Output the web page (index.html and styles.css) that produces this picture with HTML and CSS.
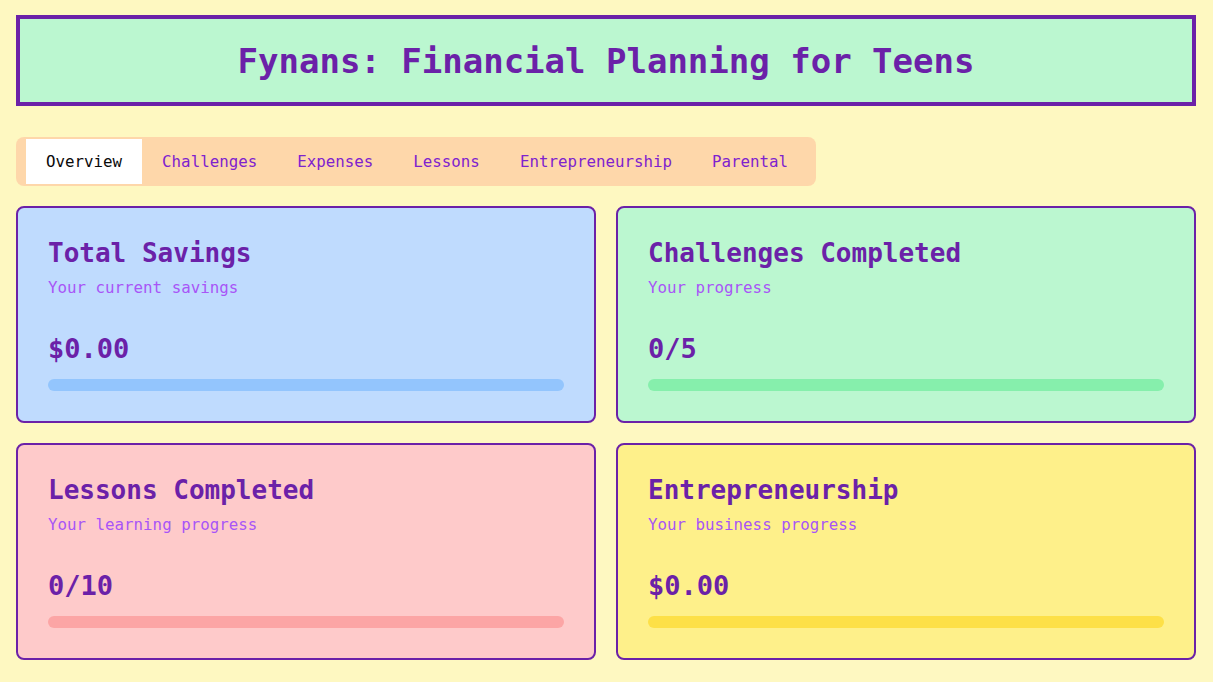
FILE: index.html
```html
<!DOCTYPE html>
<html lang="en">
<head>
<meta charset="utf-8">
<title>Fynans</title>
<link rel="stylesheet" href="styles.css">
</head>
<body>
<div class="app">
  <header class="banner">
    <h1 class="banner-title">Fynans: Financial Planning for Teens</h1>
  </header>

  <nav class="tabs">
    <span class="tab tab-active">Overview</span>
    <span class="tab">Challenges</span>
    <span class="tab">Expenses</span>
    <span class="tab">Lessons</span>
    <span class="tab">Entrepreneurship</span>
    <span class="tab">Parental</span>
  </nav>

  <main class="cards">
    <section class="card card-blue">
      <h2 class="card-title">Total Savings</h2>
      <p class="card-sub">Your current savings</p>
      <div class="card-value">$0.00</div>
      <div class="bar"></div>
    </section>
    <section class="card card-green">
      <h2 class="card-title">Challenges Completed</h2>
      <p class="card-sub">Your progress</p>
      <div class="card-value">0/5</div>
      <div class="bar"></div>
    </section>
    <section class="card card-red">
      <h2 class="card-title">Lessons Completed</h2>
      <p class="card-sub">Your learning progress</p>
      <div class="card-value">0/10</div>
      <div class="bar"></div>
    </section>
    <section class="card card-yellow">
      <h2 class="card-title">Entrepreneurship</h2>
      <p class="card-sub">Your business progress</p>
      <div class="card-value">$0.00</div>
      <div class="bar"></div>
    </section>
  </main>
</div>
</body>
</html>
```

FILE: styles.css
```css
* { box-sizing: border-box; }

html, body {
  margin: 0;
  padding: 0;
  background: #fef8c1;
}

body {
  font-family: "DejaVu Sans Mono", "Liberation Mono", monospace;
  color: #6b21a8;
}

.app {
  padding: 15px 17px 16px 16px;
  display: flex;
  flex-direction: column;
}

.banner {
  background: #bbf7d0;
  border: 4px solid #6b21a8;
  height: 91px;
  display: flex;
  align-items: center;
  justify-content: center;
  padding-top: 2px;
}

.banner-title {
  margin: 0;
  font-size: 34px;
  font-weight: bold;
  color: #6b21a8;
  line-height: 1.2;
}

.tabs {
  margin-top: 31px;
  align-self: flex-start;
  display: flex;
  background: #fed7aa;
  border-radius: 8px;
  padding: 2px 8px 2px 10px;
  height: 49px;
}

.tab {
  display: flex;
  align-items: center;
  padding: 0 20px;
  font-size: 15.8px;
  color: #7e22ce;
}

.tab-active {
  background: #ffffff;
  color: #0a0a0a;
}

.cards {
  margin-top: 20px;
  display: grid;
  grid-template-columns: 1fr 1fr;
  gap: 20px 20px;
}

.card {
  border: 2px solid #6b21a8;
  border-radius: 8px;
  padding: 30px;
  height: 217px;
  display: flex;
  flex-direction: column;
}

.card-blue { background: #bfdbfe; }
.card-green { background: #bbf7d0; }
.card-red { background: #fecaca; }
.card-yellow { background: #fef08a; }

.card-title {
  margin: 0;
  font-size: 26px;
  line-height: 31px;
  font-weight: bold;
  color: #6b21a8;
}

.card-sub {
  margin: 7px 0 0;
  font-size: 15.8px;
  line-height: 24px;
  color: #a855f7;
}

.card-value {
  margin-top: 32px;
  font-size: 27px;
  line-height: 34px;
  font-weight: bold;
  color: #6b21a8;
}

.bar {
  margin-top: 13px;
  height: 12px;
  border-radius: 999px;
}

.card-blue .bar { background: #93c5fd; }
.card-green .bar { background: #86efac; }
.card-red .bar { background: #fca5a5; }
.card-yellow .bar { background: #fde047; }
```
